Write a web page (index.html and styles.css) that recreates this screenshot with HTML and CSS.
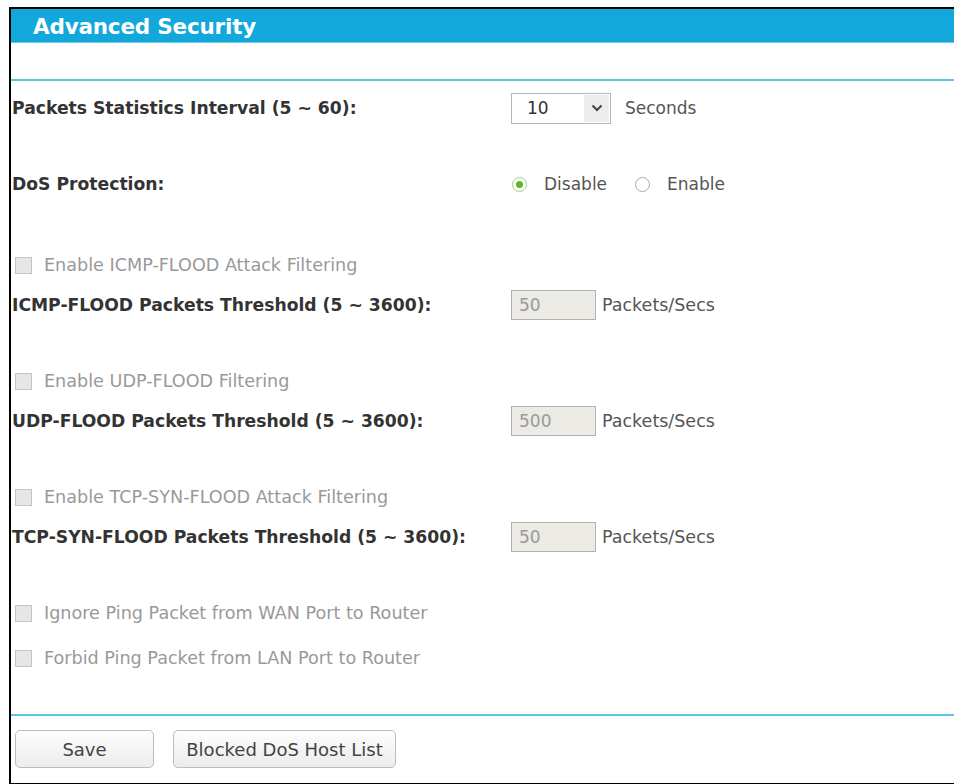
FILE: index.html
```html
<!DOCTYPE html>
<html>
<head>
<meta charset="utf-8">
<link rel="stylesheet" href="styles.css">
</head>
<body>
<div class="frame">
  <div class="header"><span class="title">Advanced Security</span></div>
  <div class="rule rule-top"></div>

  <div class="row r1">
    <div class="label">Packets Statistics Interval (5 ~ 60):</div>
    <div class="ctrl">
      <div class="select"><span class="sel-val">10</span><span class="sel-arrow"><svg width="12" height="8" viewBox="0 0 12 8"><path d="M1.5 1.5 L6 6 L10.5 1.5" fill="none" stroke="#444" stroke-width="2"/></svg></span></div>
      <span class="unit unit-sec">Seconds</span>
    </div>
  </div>

  <div class="row r2">
    <div class="label">DoS Protection:</div>
    <div class="ctrl">
      <span class="radio on"></span><span class="opt">Disable</span>
      <span class="radio"></span><span class="opt">Enable</span>
    </div>
  </div>

  <div class="row r3 chk-row">
    <span class="check"></span><span class="chk-label">Enable ICMP-FLOOD Attack Filtering</span>
  </div>
  <div class="row r4">
    <div class="label">ICMP-FLOOD Packets Threshold (5 ~ 3600):</div>
    <div class="ctrl"><div class="input">50</div><span class="unit">Packets/Secs</span></div>
  </div>

  <div class="row r5 chk-row">
    <span class="check"></span><span class="chk-label">Enable UDP-FLOOD Filtering</span>
  </div>
  <div class="row r4">
    <div class="label">UDP-FLOOD Packets Threshold (5 ~ 3600):</div>
    <div class="ctrl"><div class="input">500</div><span class="unit">Packets/Secs</span></div>
  </div>

  <div class="row r5 chk-row">
    <span class="check"></span><span class="chk-label">Enable TCP-SYN-FLOOD Attack Filtering</span>
  </div>
  <div class="row r4">
    <div class="label">TCP-SYN-FLOOD Packets Threshold (5 ~ 3600):</div>
    <div class="ctrl"><div class="input">50</div><span class="unit">Packets/Secs</span></div>
  </div>

  <div class="row r5 chk-row">
    <span class="check"></span><span class="chk-label">Ignore Ping Packet from WAN Port to Router</span>
  </div>
  <div class="row r10 chk-row">
    <span class="check"></span><span class="chk-label">Forbid Ping Packet from LAN Port to Router</span>
  </div>

  <div class="rule rule-bottom"></div>
  <div class="buttons">
    <button class="btn btn-save">Save</button>
    <button class="btn btn-list">Blocked DoS Host List</button>
  </div>
</div>
</body>
</html>
```

FILE: styles.css
```css
html, body {
  margin: 0;
  padding: 0;
  background: #fff;
}
body {
  font-family: "DejaVu Sans", Verdana, sans-serif;
  overflow: hidden;
}
.frame {
  margin: 7px 0 0 9px;
  height: 774px;
  border-top: 2px solid #000;
  border-left: 2px solid #000;
  border-bottom: 2px solid #000;
  box-sizing: content-box;
  display: flex;
  flex-direction: column;
}
.header {
  height: 33px;
  background: #12a8dc;
  border-bottom: 1px solid #6fcbeb;
  display: flex;
  align-items: center;
  padding-left: 22px;
}
.title {
  color: #fff;
  font-weight: bold;
  font-size: 21.5px;
  letter-spacing: -0.2px;
  padding-top: 2px;
}
.rule {
  height: 2px;
  background: #5fc3e6;
}
.rule-top { margin-top: 36px; }
.row {
  display: flex;
  align-items: center;
  height: 32px;
}
.r1 { margin-top: 11px; }
.r2 { margin-top: 44px; }
.r3 { margin-top: 49px; }
.r4 { margin-top: 8px; }
.r5 { margin-top: 44px; }
.r10 { margin-top: 13px; }
.label {
  width: 499px;
  padding-left: 1px;
  font-weight: bold;
  font-size: 17.2px;
  color: #333;
}
.ctrl {
  display: flex;
  align-items: center;
}
.select {
  width: 98px;
  height: 29px;
  border: 1px solid #b5b5b5;
  display: flex;
  align-items: center;
  justify-content: space-between;
}
.sel-val {
  padding-left: 15px;
  font-size: 17px;
  color: #333;
}
.sel-arrow {
  width: 25px;
  height: 27px;
  margin-right: 1px;
  background: #ececec;
  display: flex;
  align-items: center;
  justify-content: center;
}
.unit {
  margin-left: 6px;
  font-size: 17.5px;
  color: #555;
}
.unit-sec { margin-left: 14px; font-size: 17px; }
.radio {
  width: 13px;
  height: 13px;
  border: 1px solid #a8a8a8;
  border-radius: 50%;
  margin-left: 1px;
  display: flex;
  align-items: center;
  justify-content: center;
  background: #fff;
}
.radio.on {
  border-color: #9fcf82;
}
.radio.on::after {
  content: "";
  width: 7px;
  height: 7px;
  border-radius: 50%;
  background: #62b32f;
}
.opt {
  margin-left: 17px;
  margin-right: 27px;
  font-size: 17px;
  color: #555;
}
.chk-row { padding-left: 4px; }
.check {
  width: 15px;
  height: 15px;
  border: 1px solid #c4c4c4;
  background: #e6e6e6;
}
.chk-label {
  margin-left: 12px;
  font-size: 17.6px;
  color: #999;
}
.input {
  width: 76px;
  height: 28px;
  border: 1px solid #b0b0b0;
  background: #ebeae5;
  box-sizing: content-box;
  padding-left: 7px;
  display: flex;
  align-items: center;
  font-size: 17px;
  color: #999;
}
.rule-bottom { margin-top: 40px; }
.buttons {
  display: flex;
  padding-left: 4px;
  margin-top: 14px;
  gap: 19px;
}
.btn {
  height: 38px;
  border: 1px solid #bdbdbd;
  border-radius: 5px;
  background: linear-gradient(#fdfdfd, #ececec);
  font-family: "DejaVu Sans", Verdana, sans-serif;
  font-size: 18px;
  color: #444;
  padding: 0;
}
.btn-save { width: 139px; }
.btn-list { width: 223px; }
```
